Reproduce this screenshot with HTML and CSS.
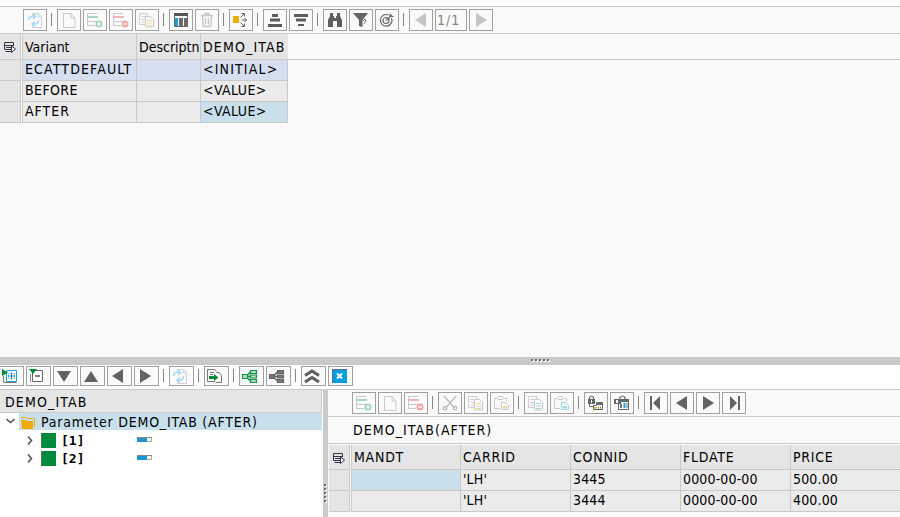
FILE: index.html
```html
<!DOCTYPE html>
<html lang="en">
<head>
<meta charset="utf-8">
<title>DEMO_ITAB</title>
<link rel="stylesheet" href="styles.css">
</head>
<body>
<svg class="defs" width="0" height="0">
  <symbol id="refresh" viewBox="0 0 16 16"><path d="M5.500 4V1.500h6l3 3.500v10.500h-9V13M11.500 1.500V5h3" fill="none" stroke="#d2d2d2"/><path d="M1.500 8c0-3 3-4.500 6-3.500M6 2l3 2.500L6 7M11.500 8c0 3-2 4.500-5 4M8 9.500L5 12l3 2.500" fill="none" stroke="#a5d9ef" stroke-width="1.500"/></symbol>
  <symbol id="page" viewBox="0 0 16 16"><path d="M2.500 1.500h7.500l4 4.500v9.500H2.500zM10 1.500V6h4" fill="none" stroke="#c9c9c9"/></symbol>
  <symbol id="rowadd" viewBox="0 0 16 16"><path d="M10 1.500H.5v12H8M.5 9.500H10" fill="none" stroke="#cacaca"/><path d="M0 4h11v2H0z" fill="#a9d6bb"/><circle cx="12" cy="12" r="3.500" fill="#a5d3b6"/><path d="M10 12h4M12 10v4" stroke="#fff" stroke-width="1.200"/></symbol>
  <symbol id="rowdel" viewBox="0 0 16 16"><path d="M10 1.500H.5v12H8M.5 9.500H10" fill="none" stroke="#cacaca"/><path d="M0 4h11v2H0z" fill="#f0b4b4"/><circle cx="12" cy="12" r="3.500" fill="#eba9a9"/><path d="M10 12h4" stroke="#fff" stroke-width="1.200"/></symbol>
  <symbol id="copy" viewBox="0 0 16 16"><path d="M6 12.500H.5v-11h8V4M2.500 4.500H6M2.500 7.500H6M2.500 10H6" fill="none" stroke="#d0ccd2"/><path d="M6.500 4.500h5l3 3v7.500h-8z" fill="#fbfbfb" stroke="#cacaca"/><path d="M8 8.500h5M8 11h5M8 13.500h5" stroke="#f3d698" stroke-width="1.200"/></symbol>
  <symbol id="copyblue" viewBox="0 0 16 16"><path d="M6 12.500H.5v-11h8V4M2.500 4.500H6M2.500 7.500H6M2.500 10H6" fill="none" stroke="#d0ccd2"/><path d="M6.500 4.500h5l3 3v7.500h-8z" fill="#fbfbfb" stroke="#cacaca"/><path d="M8 8.500h5M8 11h5M8 13.500h5" stroke="#a2d9ef" stroke-width="1.200"/></symbol>
  <symbol id="paste" viewBox="0 0 16 16"><path d="M6 13.500H.5v-10h3l1-2h4l1 2h3V6M4 4.500h5" fill="none" stroke="#cacaca"/><path d="M7.500 7.500h4l3 3v4h-7z" fill="#fafafa" stroke="#cacaca"/><path d="M9 11h4v2.500H9z" fill="#f3d698"/></symbol>
  <symbol id="pasteblue" viewBox="0 0 16 16"><path d="M6 13.500H.5v-10h3l1-2h4l1 2h3V6M4 4.500h5" fill="none" stroke="#cacaca"/><path d="M7.500 7.500h4l3 3v4h-7z" fill="#fafafa" stroke="#9edbf1"/><path d="M9 11h4v2.500H9z" fill="#9edbf1"/></symbol>
  <symbol id="calc" viewBox="0 0 16 16"><path d="M1.500 1.500h13v13h-13z" fill="#fff" stroke="#666"/><path d="M1 1h14v3H1z" fill="#555"/><path d="M2 6h3v8H2z" fill="#1ba1df"/><path d="M6 6h4v8H6zM11 6h3v8h-3z" fill="#6b6b6b"/></symbol>
  <symbol id="trash" viewBox="0 0 16 16"><path d="M2 3.500h12M6 3V1.500h4V3M3.500 4l.8 10.500h7.400L12.500 4M6.500 6v6.500M9.500 6v6.500" fill="none" stroke="#c5c5c5" stroke-width="1.300"/></symbol>
  <symbol id="spread" viewBox="0 0 16 16"><path d="M0 4h6v7H0z" fill="#f0ab00"/><path d="M7.500 5.500L11 2M8.500 8h5M7.500 10.500L11 14M8.500 1.500h3v3M11.500 6l2 2-2 2M8.500 14.500h3v-3" fill="none" stroke="#666"/></symbol>
  <symbol id="sortasc" viewBox="0 0 16 16"><path d="M5 2h6v3H5zM3 6.500h10v3H3zM1 12h14v3H1z" fill="#5c5c5c"/></symbol>
  <symbol id="sortdesc" viewBox="0 0 16 16"><path d="M1 2h14v3H1zM3 6.500h10v3H3zM5 12h6v2H5z" fill="#5c5c5c"/></symbol>
  <symbol id="find" viewBox="0 0 16 16"><path d="M3 1h3v3h1v2h2V4h1V1h3v3l2 4v7H10V9H6v6H1V8l2-4z" fill="#5e5e5e"/></symbol>
  <symbol id="filter" viewBox="0 0 16 16"><path d="M0 1h15l-5.500 7v7l-3.500-1V8z" fill="#666"/><path d="M10 9l2-2 1 2-2 3" fill="none" stroke="#777"/></symbol>
  <symbol id="target" viewBox="0 0 16 16"><g fill="none" stroke="#666" stroke-width="1.200"><path d="M12.500 6a5.800 5.800 0 1 1-3-3"/><circle cx="7" cy="8.500" r="3"/><path d="M7 8.500L13 3M11 1.500V4.500h3.500"/></g></symbol>
  <symbol id="left" viewBox="0 0 16 16"><path d="M13 1v14L2 8z"/></symbol>
  <symbol id="right" viewBox="0 0 16 16"><path d="M3 1v14l11-7z"/></symbol>
  <symbol id="down" viewBox="0 0 16 16"><path d="M1 3h14L8 14z"/></symbol>
  <symbol id="up" viewBox="0 0 16 16"><path d="M1 14h14L8 3z"/></symbol>
  <symbol id="first" viewBox="0 0 16 16"><path d="M2 1h2v14H2zM12 1v14L5 8z"/></symbol>
  <symbol id="last" viewBox="0 0 16 16"><path d="M12 1h2v14h-2zM4 1v14l7-7z"/></symbol>
  <symbol id="cut" viewBox="0 0 16 16"><g fill="none" stroke="#bcbcbc" stroke-width="1.400"><path d="M2 1l9.500 11M14 1L4.500 12"/><circle cx="3" cy="13.200" r="1.700"/><circle cx="13" cy="13.200" r="1.700"/></g></symbol>
  <symbol id="expand" viewBox="0 0 16 16"><path d="M4.500 2.500h10v11h-10z" fill="#fff" stroke="#1ba1df"/><path d="M6.500 5.500h6v5h-6z" fill="none" stroke="#a4d9ef"/><path d="M6 8h7M9.500 4.500v7" stroke="#168bc0"/><path d="M0 1l6 3.500L0 8z" fill="#008a3b"/><path d="M1.500 8v6.500h13" fill="none" stroke="#777"/></symbol>
  <symbol id="collapse" viewBox="0 0 16 16"><path d="M3.500 2.500h10v11h-10z" fill="#fff" stroke="#666"/><path d="M6 8h5" stroke="#555" stroke-width="1.500"/><path d="M0 1h8L4 6z" fill="#008a3b"/><path d="M1.500 6v8" stroke="#888"/></symbol>
  <symbol id="transfer" viewBox="0 0 16 16"><path d="M8 13.500H.5V1.500h7l2 2M3 4.500h4M3 6.500h3M9.500 4.500h3l2 3v7h-6" fill="none" stroke="#777"/><path d="M2 8h5V6l4.500 3.500L7 13v-2H2z" fill="#008a3b"/></symbol>
  <symbol id="hier" viewBox="0 0 16 16"><path d="M.5 6.500h5v4h-5zM8.500 2.500h6v3h-6zM8.500 7h6v3h-6zM8.500 11.500h6v3h-6z" fill="var(--node)" stroke="currentColor" stroke-width="1.200"/><path d="M5 8.500h3.500M5.500 7L8.500 4M5.500 10l3 3" stroke="currentColor" stroke-width="1.500" fill="none"/></symbol>
  <symbol id="chevrons" viewBox="0 0 16 16"><path d="M1 7.500l7-4.500 7 4.500M1 14l7-4.500 7 4.500" fill="none" stroke="#5e5e5e" stroke-width="3"/></symbol>
  <symbol id="close" viewBox="0 0 16 16"><path d="M1 1h15v14H1z" fill="#009de0"/><path d="M1.500 15V1.500H16" fill="none" stroke="#69679d"/><path d="M6 5.500l5 5M11 5.500l-5 5" stroke="#fff" stroke-width="2"/></symbol>
  <symbol id="lockrow" viewBox="0 0 16 16"><path d="M1.500 5V2.500q2-3 4 0V5" fill="none" stroke="#666" stroke-width="1.200"/><path d="M0 4h7v5H0z" fill="#666"/><path d="M3 5h1v3H3z" fill="#fff"/><path d="M1.500 9v2.500H5M5.500 14.500v-4h3v-3h6v7z" fill="none" stroke="#666"/><path d="M9 7h5v3H9z" fill="#666"/><path d="M6 12h3v1.500H6z" fill="#f0ab00"/><path d="M10 12h1v1.500h-1zM12 12h1v1.500h-1z" fill="#666"/></symbol>
  <symbol id="lockcol" viewBox="0 0 16 16"><path d="M6 5V2.500q2.500-3 5 0V5" fill="none" stroke="#666" stroke-width="1.200"/><path d="M0 4h7v5H0z" fill="#666"/><path d="M2 5h2v3H2z" fill="#fff"/><path d="M4.500 9v5.500h10v-9H7" fill="none" stroke="#666"/><path d="M7 4h8v3H7z" fill="#666"/><path d="M6 9h2v4H6zM12.500 8h1v5h-1z" fill="#777"/><path d="M9.500 8h2v5h-2z" fill="#29a8df"/></symbol>
  <symbol id="select" viewBox="0 0 13 13"><path d="M7 10.500H1.500M8 8.500H.5v-7h9V5M.5 4.500h9M2 6.500h5" fill="none" stroke="#333348"/><path d="M7.500 5v6.500L11.500 8z" fill="#fff" stroke="#333348"/></symbol>
  <symbol id="chip" viewBox="0 0 15 5"><path d="M0 0h15v1H0z" fill="#888"/><path d="M0 1h10v4H0z" fill="#1398da"/><path d="M4.500 1v4" stroke="#4b7faa"/><path d="M14.500 1v4M10 4.500h5" stroke="#a8b3bc"/><path d="M10 1h4v3h-4z" fill="#fff5e4"/></symbol>
</svg>

<div class="app">
  <div class="strip"></div>
  <div class="toolbar">
    <span class="btn"><svg><use href="#refresh"/></svg></span><i class="sep"></i>
    <span class="btn"><svg><use href="#page"/></svg></span>
    <span class="btn"><svg><use href="#rowadd"/></svg></span>
    <span class="btn"><svg><use href="#rowdel"/></svg></span>
    <span class="btn"><svg><use href="#copy"/></svg></span><i class="sep"></i>
    <span class="btn"><svg><use href="#calc"/></svg></span>
    <span class="btn"><svg><use href="#trash"/></svg></span><i class="sep"></i>
    <span class="btn"><svg><use href="#spread"/></svg></span><i class="sep"></i>
    <span class="btn"><svg><use href="#sortasc"/></svg></span>
    <span class="btn"><svg><use href="#sortdesc"/></svg></span><i class="sep"></i>
    <span class="btn"><svg><use href="#find"/></svg></span>
    <span class="btn"><svg><use href="#filter"/></svg></span>
    <span class="btn"><svg><use href="#target"/></svg></span><i class="sep"></i>
    <span class="btn off"><svg><use href="#left"/></svg></span>
    <span class="btn pager">1/1</span>
    <span class="btn off"><svg><use href="#right"/></svg></span>
  </div>

  <div class="variants">
    <div class="vrow head"><div class="sel"><svg><use href="#select"/></svg></div><div class="first">Variant</div><div>Descriptn</div><div class="t-wide">DEMO_ITAB</div></div>
    <div class="vrow current"><div class="sel"></div><div class="first t-wide">ECATTDEFAULT</div><div></div><div class="t-wide">&lt;INITIAL&gt;</div></div>
    <div class="vrow"><div class="sel"></div><div class="first t-slight">BEFORE</div><div></div><div class="t-slight">&lt;VALUE&gt;</div></div>
    <div class="vrow"><div class="sel"></div><div class="first t-after">AFTER</div><div></div><div class="t-slight picked">&lt;VALUE&gt;</div></div>
  </div>

  <div class="hsplit"><i></i><i></i><i></i><i></i><i></i></div>

  <div class="toolbar lower">
    <span class="btn"><svg><use href="#expand"/></svg></span>
    <span class="btn"><svg><use href="#collapse"/></svg></span>
    <span class="btn"><svg><use href="#down"/></svg></span>
    <span class="btn"><svg><use href="#up"/></svg></span>
    <span class="btn"><svg><use href="#left"/></svg></span>
    <span class="btn"><svg><use href="#right"/></svg></span><i class="sep"></i>
    <span class="btn"><svg><use href="#refresh"/></svg></span><i class="sep"></i>
    <span class="btn"><svg><use href="#transfer"/></svg></span><i class="sep"></i>
    <span class="btn green"><svg><use href="#hier"/></svg></span>
    <span class="btn gray"><svg><use href="#hier"/></svg></span><i class="sep"></i>
    <span class="btn"><svg><use href="#chevrons"/></svg></span>
    <span class="btn"><svg><use href="#close"/></svg></span>
  </div>

  <div class="panes">
    <div class="tree">
      <div class="treehead t-wide">DEMO_ITAB</div>
      <div class="root">
        <span class="twist"><svg width="9" height="6" viewBox="0 0 9 6"><path d="M.5 1l4 3.500L8.500 1" fill="none" stroke="#555" stroke-width="1.600"/></svg></span>
        <div class="rootlabel"><svg width="14" height="12" viewBox="0 0 14 12"><path d="M1 2V.5h4l1 1h7.500V10" fill="none" stroke="#f0ab00"/><path d="M0 3h5l1 1h6v8H1z" fill="#f0ab00"/></svg><span class="t-param">Parameter DEMO_ITAB (AFTER)</span></div>
      </div>
      <div class="node"><svg class="arrow" viewBox="0 0 6 9"><path d="M1 .5l3.500 4L1 8.500" fill="none" stroke="#555" stroke-width="1.600"/></svg><i class="square"></i><b>[1]</b><svg class="chip"><use href="#chip"/></svg></div>
      <div class="node"><svg class="arrow" viewBox="0 0 6 9"><path d="M1 .5l3.500 4L1 8.500" fill="none" stroke="#555" stroke-width="1.600"/></svg><i class="square"></i><b>[2]</b><svg class="chip"><use href="#chip"/></svg></div>
    </div>
    <div class="vsplit"><i></i><i></i><i></i><i></i><i></i></div>
    <div class="detail">
      <div class="toolbar inner">
        <span class="btn"><svg><use href="#rowadd"/></svg></span>
        <span class="btn"><svg><use href="#page"/></svg></span>
        <span class="btn"><svg><use href="#rowdel"/></svg></span><i class="sep"></i>
        <span class="btn"><svg><use href="#cut"/></svg></span>
        <span class="btn"><svg><use href="#copy"/></svg></span>
        <span class="btn"><svg><use href="#paste"/></svg></span><i class="sep"></i>
        <span class="btn"><svg><use href="#copyblue"/></svg></span>
        <span class="btn"><svg><use href="#pasteblue"/></svg></span><i class="sep"></i>
        <span class="btn"><svg><use href="#lockrow"/></svg></span>
        <span class="btn"><svg><use href="#lockcol"/></svg></span><i class="sep"></i>
        <span class="btn"><svg><use href="#first"/></svg></span>
        <span class="btn"><svg><use href="#left"/></svg></span>
        <span class="btn"><svg><use href="#right"/></svg></span>
        <span class="btn"><svg><use href="#last"/></svg></span>
      </div>
      <div class="title">DEMO_ITAB(AFTER)</div>
      <div class="drow head"><div class="sel"><svg><use href="#select"/></svg></div><div class="first">MANDT</div><div>CARRID</div><div>CONNID</div><div>FLDATE</div><div>PRICE</div></div>
      <div class="drow"><div class="sel"></div><div class="first picked"></div><div>'LH'</div><div>3445</div><div>0000-00-00</div><div>500.00</div></div>
      <div class="drow"><div class="sel"></div><div class="first"></div><div>'LH'</div><div>3444</div><div>0000-00-00</div><div>400.00</div></div>
    </div>
  </div>
</div>
</body>
</html>
```
FILE: styles.css
```css
* { box-sizing: border-box; }
body {
  margin: 0;
  font: 14px/18px "DejaVu Sans Condensed", "DejaVu Sans", sans-serif;
  font-stretch: condensed;
  color: #000;
}
.defs { display: block; }
.app {
  width: 900px;
  height: 517px;
  display: flex;
  flex-direction: column;
  overflow: hidden;
  background: #f9f9f9;
  white-space: nowrap;
}
.strip { height: 6px; background: #fdfefe; flex: none; }

.toolbar {
  height: 28px;
  flex: none;
  display: flex;
  align-items: flex-start;
  gap: 2px;
  padding: 2px 0 0 23px;
  border-top: 1px solid #cacaca;
  border-bottom: 1px solid #cacaca;
  background: #f9f9f9;
}
.btn {
  width: 24px;
  height: 22px;
  flex: none;
  display: flex;
  align-items: center;
  justify-content: center;
  border: 1px solid #a0a0a0;
  background: #fafafa;
}
.btn svg { width: 16px; height: 16px; fill: #636363; }
.btn.off svg { fill: #c4c4c4; }
.pager { width: 32px; justify-content: flex-start; padding-left: 1px; color: #858585; letter-spacing: 1px; }
.sep { width: 6px; height: 13px; margin-top: 4px; flex: none; display: flex; padding-left: 2px; }
.sep::before { content: ""; width: 1px; background: #858585; }

.lower {
  height: 24px;
  padding: 1px 0 0;
  margin-left: -1px;
  border: 0;
  background: #fff;
}
.lower .btn { width: 25px; height: 20px; padding-right: 3px; }
.lower .sep { margin-top: 3px; }
.green { color: #149447; --node: #b5dfc4; }
.gray { color: #666; --node: #777; }

.t-wide { letter-spacing: 1.15px; }
.t-after { letter-spacing: 1px; }
.t-slight { letter-spacing: .4px; }
.t-param { letter-spacing: .78px; }

.variants { height: 323px; flex: none; }
.vrow, .drow { display: grid; height: 21px; }
.vrow { grid-template-columns: 22px 115px 64px 87px; width: 288px; }
.vrow > div, .drow > div {
  background: #ebebeb;
  border-right: 1px solid #c9c9c9;
  border-bottom: 1px solid #c9c9c9;
  padding-left: 2px;
  line-height: 18px;
  overflow: hidden;
}
.vrow > .sel, .drow > .sel { background: #e5e5e5; border-right: 1px solid #c9c9c9; margin-right: 1px; padding: 0; }
.vrow > .first, .drow > .first { border-left: 1px solid #c9c9c9; }
.vrow.head { height: 26px; width: 900px; border-bottom: 1px solid #c9c9c9; }
.vrow.head > div { background: #e5e5e5; border-bottom: 0; line-height: 26px; }
.vrow.head > div:last-child { border-right: 0; }
.vrow.current > div:not(.sel) { background: #d5dff0; }
.vrow > div.picked, .drow > div.picked { background: #c9e0ec; }
.sel svg { display: block; width: 13px; height: 13px; margin: 7px 0 0 4px; }

.hsplit {
  height: 8px;
  flex: none;
  display: flex;
  gap: 2px;
  padding: 2px 0 0 531px;
  background: #cacaca;
}
.hsplit i, .vsplit i { width: 2px; height: 2px; background: #6c6c6c; box-shadow: 1px 1px #fff; }

.panes { flex: 1; display: flex; border-top: 1px solid #cacaca; min-height: 0; }
.tree { width: 323px; flex: none; padding-right: 1px; background: #fff; }
.treehead {
  height: 23px;
  padding-left: 5px;
  line-height: 24px;
  background: #e5e5e5;
  border-right: 1px solid #c9c9c9;
  border-bottom: 1px solid #c9c9c9;
}
.root { display: flex; height: 17px; margin-bottom: 1px; }
.twist { width: 19px; padding: 5px 0 0 6px; line-height: 0; }
.rootlabel { flex: 1; display: flex; background: #c9e0ec; padding: 0 0 0 3px; line-height: 19px; }
.rootlabel svg { margin: 4px 5px 0 -1px; flex: none; }
.rootlabel span { margin-left: 1px; }
.node { display: flex; height: 18px; padding: 2px 0 0 27px; }
.arrow { width: 6px; height: 9px; margin: 3px 8px 0 0; }
.square { width: 15px; height: 15px; background: #008a3b; border-left: 1px solid #557b4b; margin-right: 5px; }
.node b { width: 76px; font: bold 13px/15px "DejaVu Sans Mono", monospace; }
.chip { width: 15px; height: 5px; margin-top: 4px; }
.vsplit {
  width: 5px;
  flex: none;
  display: flex;
  flex-direction: column;
  gap: 2px;
  padding: 94px 0 0 1px;
  background: #cacaca;
}

.detail { flex: 1; min-width: 0; background: #f9f9f9; }
.inner { height: 27px; padding-left: 24px; border-top: 0; }
.title { height: 27px; padding: 4px 0 0 25px; border-bottom: 1px solid #c9c9c9; margin-bottom: 1px; letter-spacing: 1.07px; }
.drow { grid-template-columns: 23px 110px 110px 110px 110px 1fr; }
.drow > div { letter-spacing: .15px; }
.drow > .sel { margin-left: 1px; }
.drow > div:last-child { border-right: 0; }
.drow.head { height: 25px; }
.drow.head > div { background: #e5e5e5; line-height: 24px; letter-spacing: .75px; }
```
